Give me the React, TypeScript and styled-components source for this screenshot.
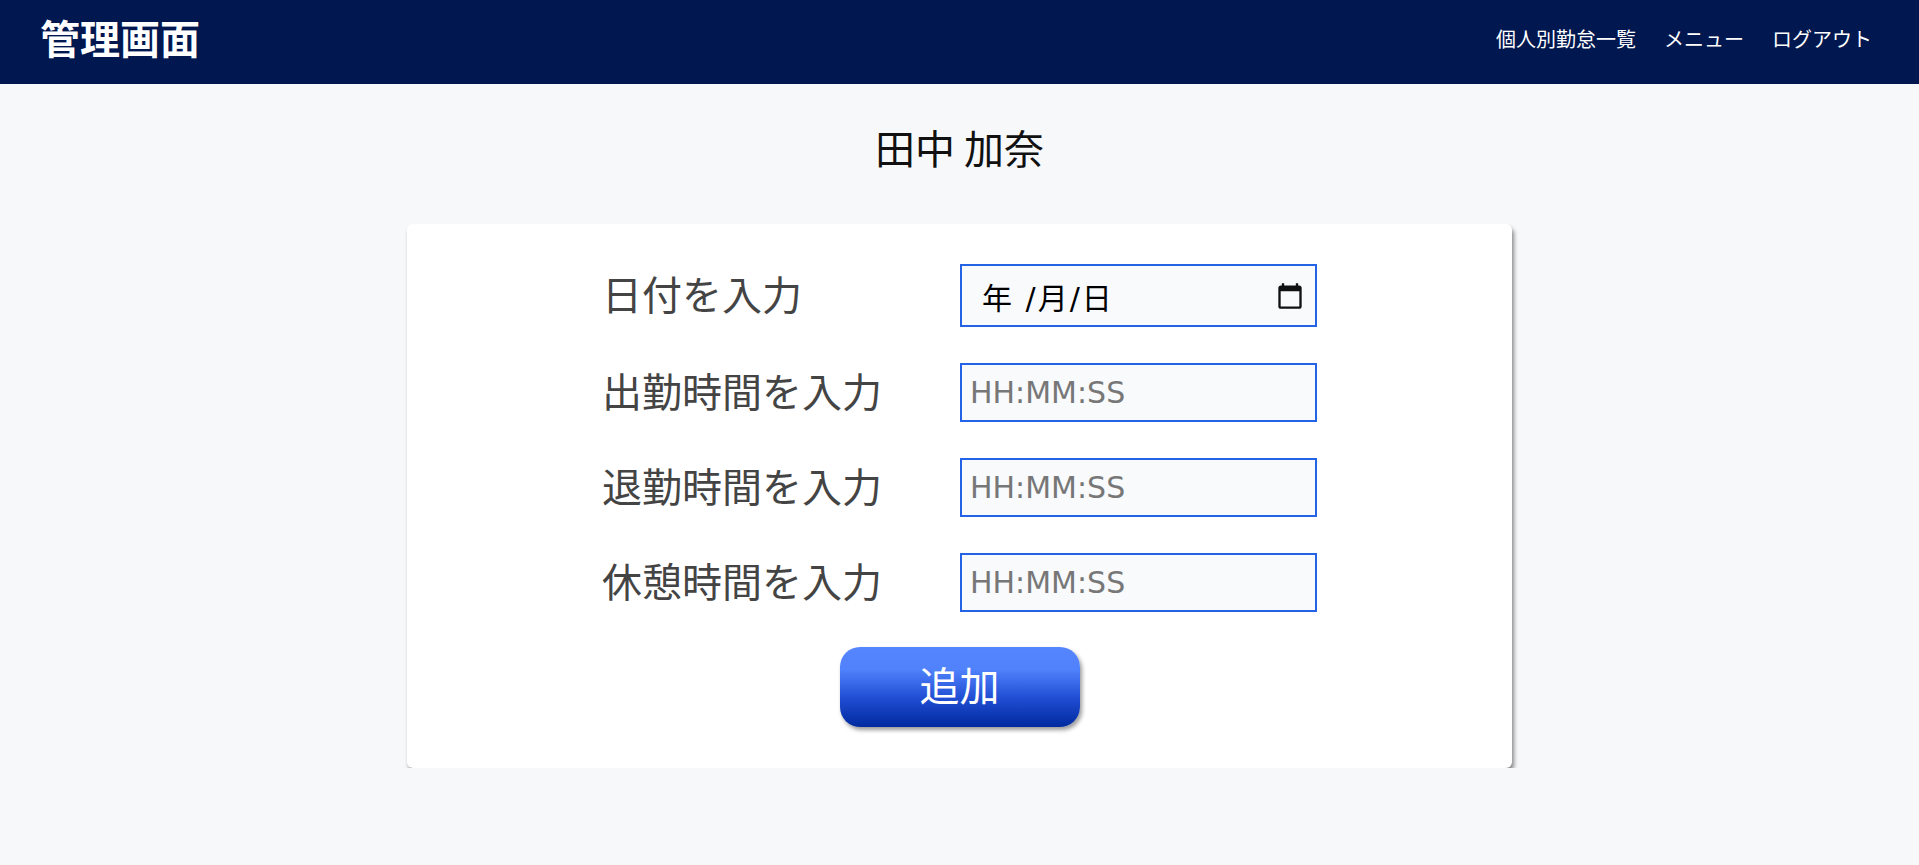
import React from "react";
import styled, { createGlobalStyle } from "styled-components";

const GlobalStyle = createGlobalStyle`
  html, body {
    margin: 0;
    padding: 0;
    background: #f7f8fa;
    font-family: "DejaVu Sans", "Noto Sans CJK JP", sans-serif;
  }
  * { box-sizing: border-box; }
`;

const Header = styled.header`
  height: 84px;
  background: #00174f;
  display: flex;
  align-items: center;
  justify-content: space-between;
  padding: 0 47px 0 40px;
`;

const Logo = styled.h1`
  margin: 0;
  font-family: "Noto Sans CJK JP", sans-serif;
  font-size: 40px;
  font-weight: 700;
  line-height: 1;
  color: #ffffff;
  padding-bottom: 10px;
`;

const Nav = styled.nav`
  display: flex;
  gap: 28px;
  padding-bottom: 6px;
`;

const NavLink = styled.a`
  font-family: "Noto Sans CJK JP", sans-serif;
  font-size: 20px;
  line-height: 1;
  color: #ffffff;
  text-decoration: none;
`;

const Name = styled.h2`
  margin: 35px 0 49px;
  font-family: "Noto Sans CJK JP", sans-serif;
  font-size: 40px;
  font-weight: 400;
  line-height: 56px;
  text-align: center;
  color: #111;
`;

const Card = styled.section`
  width: 1105px;
  margin: 0 auto;
  background: #ffffff;
  border-radius: 6px;
  box-shadow: 2px 4px 4px rgba(0, 0, 0, 0.45);
  padding: 40px 0 41px;
  display: flex;
  flex-direction: column;
  align-items: center;
`;

const Form = styled.div`
  display: grid;
  grid-template-columns: 358px 357px;
  row-gap: 36px;
  align-items: center;
`;

const Label = styled.label`
  font-family: "Noto Sans CJK JP", sans-serif;
  font-size: 40px;
  line-height: 1;
  color: #444;
  padding-bottom: 6px;
  white-space: nowrap;
`;

const DateField = styled.div`
  height: 63px;
  border: 2px solid #2563e6;
  background: #f8fafc;
  display: flex;
  align-items: center;
  justify-content: space-between;
  padding: 0 11px 0 20px;
  font-size: 30px;
  letter-spacing: 2px;
  color: #000;
`;

const TimeInput = styled.input`
  height: 59px;
  width: 100%;
  border: 2px solid #2563e6;
  background: #f8fafc;
  padding: 0 8px;
  font-family: "DejaVu Sans", "Noto Sans CJK JP", sans-serif;
  font-size: 30px;
  color: #000;
  outline: none;
  &::placeholder {
    color: #777;
  }
`;

const AddButton = styled.button`
  margin-top: 35px;
  width: 240px;
  height: 80px;
  border: none;
  border-radius: 20px;
  background: linear-gradient(
    to bottom,
    #5585ff 0%,
    #5082fc 28%,
    #1f4cd2 65%,
    #002a9e 100%
  );
  box-shadow: 2px 3px 4px rgba(0, 0, 0, 0.4);
  color: #ffffff;
  font-family: "Noto Sans CJK JP", sans-serif;
  font-size: 40px;
  line-height: 1;
  padding: 0 0 6px;
  cursor: pointer;
`;

const CalendarIcon = () => (
  <svg width="28" height="28" viewBox="0 0 24 24" fill="#111">
    <path d="M20 3h-1V1h-2v2H7V1H5v2H4c-1.1 0-2 .9-2 2v16c0 1.1.9 2 2 2h16c1.1 0 2-.9 2-2V5c0-1.1-.9-2-2-2zm0 18H4V8h16v13z" />
  </svg>
);

const timeRows = ["出勤時間を入力", "退勤時間を入力", "休憩時間を入力"];

export default function App() {
  return (
    <>
      <GlobalStyle />
      <Header>
        <Logo>管理画面</Logo>
        <Nav>
          <NavLink href="#">個人別勤怠一覧</NavLink>
          <NavLink href="#">メニュー</NavLink>
          <NavLink href="#">ログアウト</NavLink>
        </Nav>
      </Header>
      <main>
        <Name>田中 加奈</Name>
        <Card>
          <Form>
            <Label>日付を入力</Label>
            <DateField>
              <span>年 /月/日</span>
              <CalendarIcon />
            </DateField>
            {timeRows.map((t) => (
              <React.Fragment key={t}>
                <Label>{t}</Label>
                <TimeInput placeholder="HH:MM:SS" />
              </React.Fragment>
            ))}
          </Form>
          <AddButton>追加</AddButton>
        </Card>
      </main>
    </>
  );
}
